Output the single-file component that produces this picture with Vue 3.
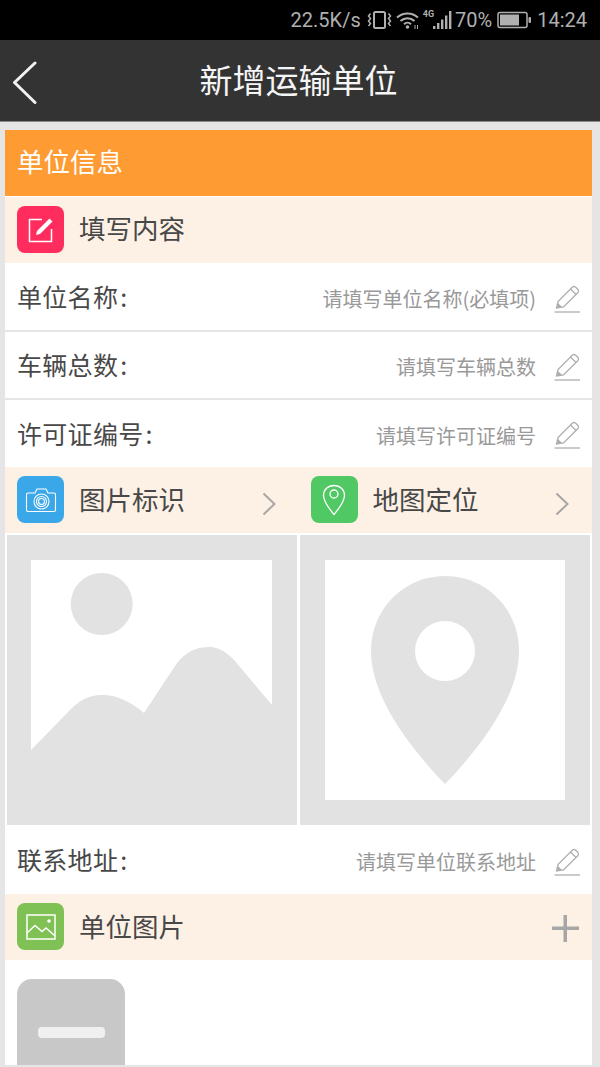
<script setup>
const infoRows = [
  { label: '单位名称', hint: '请填写单位名称(必填项)' },
  { label: '车辆总数', hint: '请填写车辆总数' },
  { label: '许可证编号', hint: '请填写许可证编号' }
]
</script>

<template>
  <div class="page">
    <!-- status bar -->
    <div class="status">
      <span class="speed">22.5K/s</span>
      <svg class="vib" width="25" height="20" viewBox="0 0 25 20" fill="none" stroke="#b0b0b0" stroke-width="1.5">
        <rect x="7" y="2" width="11" height="16" rx="1.5" stroke-width="2" />
        <path d="M3.5 3.5 L1.5 6 L3.5 8.5 L1.5 11 L3.5 13.5 L1.5 16" />
        <path d="M21.5 3.5 L23.5 6 L21.5 8.5 L23.5 11 L21.5 13.5 L23.5 16" />
      </svg>
      <svg class="wifi" width="24" height="20" viewBox="0 0 24 20" fill="none" stroke="#b0b0b0" stroke-width="2">
        <path d="M1 7.5 C7 2 16 2 22 7.5" />
        <path d="M4.5 11 C8.500 7.200 14.500 7.200 18.500 11" />
        <path d="M8 14.200 C10 12.300 13 12.300 15 14.200" />
        <circle cx="11.500" cy="17" r="1.800" fill="#b0b0b0" stroke="none" />
        <path d="M19 15 V19 M21.500 15 V19" stroke-width="1" />
      </svg>
      <span class="net">4G</span>
      <svg class="bars" width="19" height="20" viewBox="0 0 19 20" fill="#b0b0b0">
        <rect x="0" y="16" width="2.400" height="3" />
        <rect x="4" y="13" width="2.400" height="6" />
        <rect x="8" y="9.500" width="2.400" height="9.500" />
        <rect x="12" y="5.500" width="2.400" height="13.500" />
        <rect x="16" y="1" width="2.400" height="18" />
      </svg>
      <span class="pct">70%</span>
      <svg class="batt" width="34" height="18" viewBox="0 0 34 18">
        <rect x="1" y="1.500" width="29" height="15" rx="2" fill="none" stroke="#b0b0b0" stroke-width="1.500" />
        <rect x="3" y="3.500" width="19" height="11" fill="#b0b0b0" />
        <rect x="31.500" y="6" width="2.500" height="6" rx="1" fill="#b0b0b0" />
      </svg>
      <span class="time">14:24</span>
    </div>

    <!-- title bar -->
    <header class="head">
      <svg class="back" width="26" height="44" viewBox="0 0 26 44" fill="none" stroke="#f2f2f2" stroke-width="3" stroke-linecap="round" stroke-linejoin="round">
        <path d="M23 3 L2.500 22.500 L23 42.500" />
      </svg>
      <h1 class="title">新增运输单位</h1>
    </header>

    <main class="card">
      <div class="orange">单位信息</div>

      <div class="section">
        <span class="badge pink">
          <svg width="30" height="30" viewBox="0 0 30 30" fill="none" stroke="#fff" stroke-width="1.500">
            <path d="M16 4.500 H3.500 V26.500 H25.500 V14" />
            <path d="M10 20 L11 16 L23.500 3.500 L26.500 6.500 L14 19 Z" fill="#fff" stroke="none" />
          </svg>
        </span>
        <span class="sec-text">填写内容</span>
      </div>

      <div v-for="(row, i) in infoRows" :key="row.label" class="row" :class="{ lined: i < 2 }">
        <span class="label">{{ row.label }}<span class="colon">:</span></span>
        <span class="hint">{{ row.hint }}</span>
        <svg class="pen" width="26" height="28" viewBox="0 0 26 28" fill="none" stroke="#aeaeae" stroke-width="1.300">
          <path d="M0.500 27 H26" />
          <path d="M2.500 23 L4 16.500 L18.500 2 Q20 1 21.500 2 L24 4.500 Q25 6 24 7.500 L9.500 22 Z" />
          <path d="M16.500 4 L22 9.500" />
          <path d="M2.500 23 L4 18 L8 22 Z" fill="#aeaeae" stroke="none" />
        </svg>
      </div>

      <div class="split">
        <div class="section half">
          <span class="badge blue">
            <svg width="32" height="28" viewBox="0 0 32 28" fill="none" stroke="#fff" stroke-width="1.100">
              <path d="M3 7 H10 L12 3 H21 L23 7 H29 Q30.500 7 30.500 8.500 V24 Q30.500 25.500 29 25.500 H3 Q1.500 25.500 1.500 24 V8.500 Q1.500 7 3 7 Z" />
              <circle cx="16.500" cy="15.500" r="7.500" />
              <circle cx="16.500" cy="15.500" r="5" />
              <circle cx="16.500" cy="15.500" r="3" />
            </svg>
          </span>
          <span class="sec-text">图片标识</span>
          <svg class="chev" width="14" height="24" viewBox="0 0 14 24" fill="none" stroke="#a6a6a6" stroke-width="2">
            <path d="M1.500 1.500 L12.500 12 L1.500 22.500" />
          </svg>
        </div>
        <div class="section half">
          <span class="badge green">
            <svg width="24" height="32" viewBox="0 0 24 32" fill="none" stroke="#fff" stroke-width="1.300">
              <path d="M12 1.500 C18 1.500 22.500 5.500 22.500 11.500 C22.500 17 17 24.500 12 30.500 C7 24.500 1.500 17 1.500 11.500 C1.500 5.500 6 1.500 12 1.500 Z" />
              <circle cx="12" cy="10" r="4" />
            </svg>
          </span>
          <span class="sec-text">地图定位</span>
          <svg class="chev" width="14" height="24" viewBox="0 0 14 24" fill="none" stroke="#a6a6a6" stroke-width="2">
            <path d="M1.500 1.500 L12.500 12 L1.500 22.500" />
          </svg>
        </div>
      </div>

      <div class="tiles">
        <div class="tile">
          <svg width="290" height="290" viewBox="0 0 290 290">
            <rect width="290" height="290" fill="#e2e2e2" />
            <rect x="24" y="25" width="241" height="240" fill="#fff" />
            <circle cx="94.700" cy="69" r="31" fill="#e2e2e2" />
            <path d="M24 215 L64 174 C76 162 86 160 96 160 C110 160 124 167 137 178 L170 128 C180 116 190 112 202 112 C214 112 224 120 233 132 L265 170 V266 H24 Z" fill="#e2e2e2" />
          </svg>
        </div>
        <div class="tile">
          <svg width="290" height="290" viewBox="0 0 290 290">
            <rect width="290" height="290" fill="#e2e2e2" />
            <rect x="25" y="25" width="240" height="240" fill="#fff" />
            <path d="M145 41 C186 41 219 74 219 116 C219 165 175 218 145 249 C115 218 71 165 71 116 C71 74 104 41 145 41 Z" fill="#e2e2e2" />
            <circle cx="145" cy="116" r="30" fill="#fff" />
          </svg>
        </div>
      </div>

      <div class="row address">
        <span class="label">联系地址<span class="colon">:</span></span>
        <span class="hint">请填写单位联系地址</span>
        <svg class="pen" width="26" height="28" viewBox="0 0 26 28" fill="none" stroke="#aeaeae" stroke-width="1.300">
          <path d="M0.500 27 H26" />
          <path d="M2.500 23 L4 16.500 L18.500 2 Q20 1 21.500 2 L24 4.500 Q25 6 24 7.500 L9.500 22 Z" />
          <path d="M16.500 4 L22 9.500" />
          <path d="M2.500 23 L4 18 L8 22 Z" fill="#aeaeae" stroke="none" />
        </svg>
      </div>

      <div class="section">
        <span class="badge leaf">
          <svg width="32" height="28" viewBox="0 0 32 28" fill="none" stroke="#fff" stroke-width="1.500">
            <rect x="2" y="2" width="28" height="24" />
            <path d="M2 20 L10 12.500 L17 18.500 L21 15 L30 23" />
            <circle cx="24" cy="8" r="1.800" fill="#fff" stroke="none" />
          </svg>
        </span>
        <span class="sec-text">单位图片</span>
        <svg class="plus" width="27" height="27" viewBox="0 0 27 27" fill="#a6a6a6">
          <rect x="0" y="11.500" width="27" height="3.500" />
          <rect x="11.500" y="0" width="3.500" height="27" />
        </svg>
      </div>

      <div class="photos">
        <div class="thumb"><span class="dash"></span></div>
      </div>
    </main>
  </div>
</template>

<style scoped>
.page {
  width: 600px;
  height: 1067px;
  overflow: hidden;
  background: #e5e5e5;
  font-family: "Noto Sans CJK SC", "Noto Sans", sans-serif;
  display: flex;
  flex-direction: column;
}

.status {
  height: 40px;
  flex: none;
  background: #000;
  color: #b0b0b0;
  display: flex;
  align-items: center;
  justify-content: flex-end;
  padding-right: 13px;
  font-family: Roboto, "Liberation Sans", sans-serif;
  font-size: 20px;
}
.speed { margin-right: 6px; }
.vib { margin-right: 4px; }
.wifi { margin-right: 3px; }
.net {
  font-size: 9px;
  font-weight: 700;
  align-self: flex-start;
  margin-top: 9px;
  margin-right: -1px;
}
.bars { margin-right: 3px; }
.pct { margin-right: 5px; }
.batt { margin-right: 6px; }

.head {
  height: 81px;
  flex: none;
  background: #333;
  border-bottom: 1px solid #8a8a8a;
  position: relative;
  display: flex;
  align-items: center;
  justify-content: center;
}
.back {
  position: absolute;
  left: 12px;
  top: 20px;
}
.title {
  margin: 0 3px 4px 0;
  font-size: 33px;
  font-weight: 400;
  color: #f5f5f5;
}

.card {
  margin: 8px 8px 2px 5px;
  flex: 1;
  min-height: 0;
  overflow: hidden;
  background: #fff;
}

.orange {
  height: 66px;
  background: #ff9b33;
  color: #fff;
  font-size: 26.5px;
  line-height: 62px;
  padding-left: 12px;
  margin-bottom: 1px;
}

.section {
  height: 66px;
  background: #fdf1e6;
  display: flex;
  align-items: center;
  padding: 0 12px 1px;
  box-sizing: border-box;
}
.section + .row { margin-top: 1px; }

.badge {
  width: 47px;
  height: 47px;
  border-radius: 8px;
  flex: none;
  display: flex;
  align-items: center;
  justify-content: center;
}
.pink { background: #ff2d5e; }
.blue { background: #3aa8e8; }
.green { background: #50c864; }
.leaf { background: #80c155; }

.sec-text {
  margin: 0 0 5px 15px;
  font-size: 26.5px;
  color: #484848;
  flex: 1;
}
.half .sec-text,
.address + .section .sec-text {
  margin-bottom: 3px;
}

.row {
  height: 67px;
  box-sizing: border-box;
  display: flex;
  align-items: center;
  padding: 0 12px;
}
.lined {
  height: 68px;
  border-bottom: 2px solid #e5e5e5;
}
.address {
  height: 68px;
}
.label {
  font-size: 25px;
  letter-spacing: 0.3px;
  color: #484848;
  flex: 1;
  margin-bottom: 2px;
}
.colon {
  margin-left: 2px;
}
.hint {
  font-size: 20px;
  color: #999;
  margin: 3px 18px 0 0;
}
.pen {
  flex: none;
  margin-top: 3px;
}

.split {
  display: flex;
}
.half {
  width: 50%;
  padding-right: 23px;
}
.chev {
  flex: none;
  margin-top: 8px;
}

.tiles {
  display: flex;
  justify-content: space-between;
  padding: 2px 2px 1px;
}
.tile {
  width: 290px;
  height: 290px;
}
.tile svg { display: block; }

.plus {
  flex: none;
  margin: 4px 1px 0 0;
}

.photos {
  padding: 19px 12px 0;
}
.thumb {
  width: 108px;
  height: 108px;
  border-radius: 15px;
  background: #c8c8c8;
  display: flex;
  align-items: center;
  justify-content: center;
}
.dash {
  width: 67px;
  height: 11px;
  border-radius: 4px;
  background: #f0f0f0;
  margin-top: -1px;
}
</style>
